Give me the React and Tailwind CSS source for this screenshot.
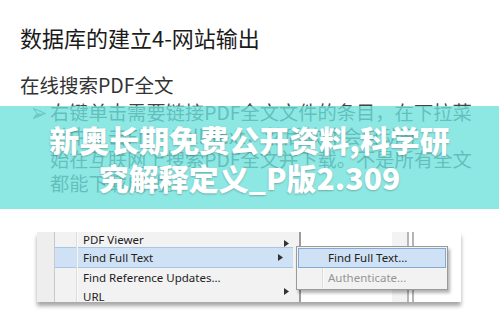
import React from 'react';

const cjk = { fontFamily: '"Noto Sans CJK SC", "Noto Sans", sans-serif' };
const ui = { fontFamily: '"Noto Sans", "Liberation Sans", sans-serif' };

const Arrow = () => (
  <svg width="5" height="7" viewBox="0 0 5 7" className="fill-[#333]">
    <path d="M0 0 L5 3.5 L0 7 Z" />
  </svg>
);

// the ➢ bullet of the slide
const Bullet = () => (
  <svg width="13" height="11" viewBox="0 0 13 11" className="mt-[7px]">
    <path d="M0.5 0.5 L12.5 5.5 L0.5 10.5 L4 5.5 Z" fill="#fff" stroke="#555" strokeWidth="1" strokeLinejoin="round" />
    <path d="M4 5.5 L12.5 5.5 L0.5 10.5 Z" fill="#777" />
  </svg>
);

const MenuRow = ({ label, arrow, active, className = '' }) => (
  <div
    className={`flex items-center pl-[28px] pr-[10px] ${className} ${
      active ? 'bg-[#cfe1f4] border-y border-[#a9c6e6]' : ''
    }`}
  >
    <span className="flex-1 text-[11.5px] text-[#222]">{label}</span>
    {arrow && <Arrow />}
  </div>
);

const ContextMenuShot = () => (
  <div className="relative ml-[37px] mt-[37px] w-[424px] h-[70px] flex bg-white shadow-[0_4px_4px_rgba(0,0,0,0.35)]" style={ui}>
    {/* left strip of the window behind */}
    <div className="w-[18px] bg-[#eeeeee] border-r border-[#c9c9c9]" />

    {/* main menu */}
    <div className="w-[244px] relative bg-[#f2f2f2] flex flex-col overflow-hidden">
      <div className="absolute left-[21px] top-0 bottom-0 w-[2px] border-l border-[#dcdcdc] bg-white/70" />
      <MenuRow label="PDF Viewer" arrow className="h-[15px] items-end leading-[14px]" />
      <MenuRow label="Find Full Text" arrow active className="h-[21px] mr-[6px]" />
      <MenuRow label="Find Reference Updates..." className="h-[20px]" />
      <MenuRow label="URL" arrow className="h-[14px] items-start leading-[17px]" />
    </div>

    {/* window behind the menus */}
    <div className="w-[2px] bg-[#9c9c9c]" />
    <div className="w-[91px] bg-white" />
    <div className="w-[15px] bg-[#f3f3f3]" />
    <div className="w-[7px] flex justify-between bg-white">
      <div className="w-[2px] bg-[#b5b5b5]" />
      <div className="w-[2px] bg-[#b5b5b5]" />
    </div>
    <div className="flex-1 bg-white" />

    {/* submenu */}
    <div className="absolute left-[259px] top-[14px] w-[152px] h-[44px] bg-[#f2f2f2] border border-[#9a9a9a] shadow-[2px_3px_3px_rgba(0,0,0,0.3)] flex flex-col py-[1px] px-[1px]">
      <div className="absolute left-[25px] top-[1px] bottom-[1px] w-[2px] border-l border-[#dcdcdc] bg-white/70" />
      <div className="relative h-[20px] flex items-center pl-[29px] bg-[#cfe1f4] border border-[#86a9d3] text-[11.5px] text-[#222]">
        Find Full Text...
      </div>
      <div className="relative h-[21px] flex items-center pl-[30px] text-[11.5px] text-[#959595]">
        Authenticate...
      </div>
    </div>
  </div>
);

const bulletLines = [
  '右键单击需要链接PDF全文文件的条目，在下拉菜',
  '单中点击Find Full Text，然后软件会自动开',
  '始在互联网上搜索PDF全文并下载。不是所有全文',
  '都能下载成功。',
];

export default function App() {
  return (
    <div className="relative w-[499px] h-[319px] overflow-hidden bg-white">
      <div className="pt-[22px] pl-[20px]" style={cjk}>
        <h1 className="text-[22px] leading-[30px] text-[#1b1b1b] font-normal">数据库的建立4-网站输出</h1>
        <h2 className="mt-[20px] text-[19.5px] leading-[26px] text-[#333]">在线搜索PDF全文</h2>
        <div className="mt-[3px] flex pl-[13px] text-[#444]">
          <div className="w-[17px]">
            <Bullet />
          </div>
          <div className="text-[19.3px] leading-[23.5px]">
            {bulletLines.map((line) => (
              <div key={line} className="whitespace-nowrap">{line}</div>
            ))}
          </div>
        </div>
      </div>

      <ContextMenuShot />

      {/* caption band over the slide */}
      <div
        className="absolute left-0 right-0 top-[106px] h-[103px] bg-[rgba(109,226,221,0.78)] flex flex-col items-center justify-center text-white font-black text-[30px] leading-[38px] [text-shadow:0_1px_2px_rgba(0,0,0,0.25)]"
        style={cjk}
      >
        <span>新奥长期免费公开资料,科学研</span>
        <span>究解释定义_P版2.309</span>
      </div>
    </div>
  );
}
